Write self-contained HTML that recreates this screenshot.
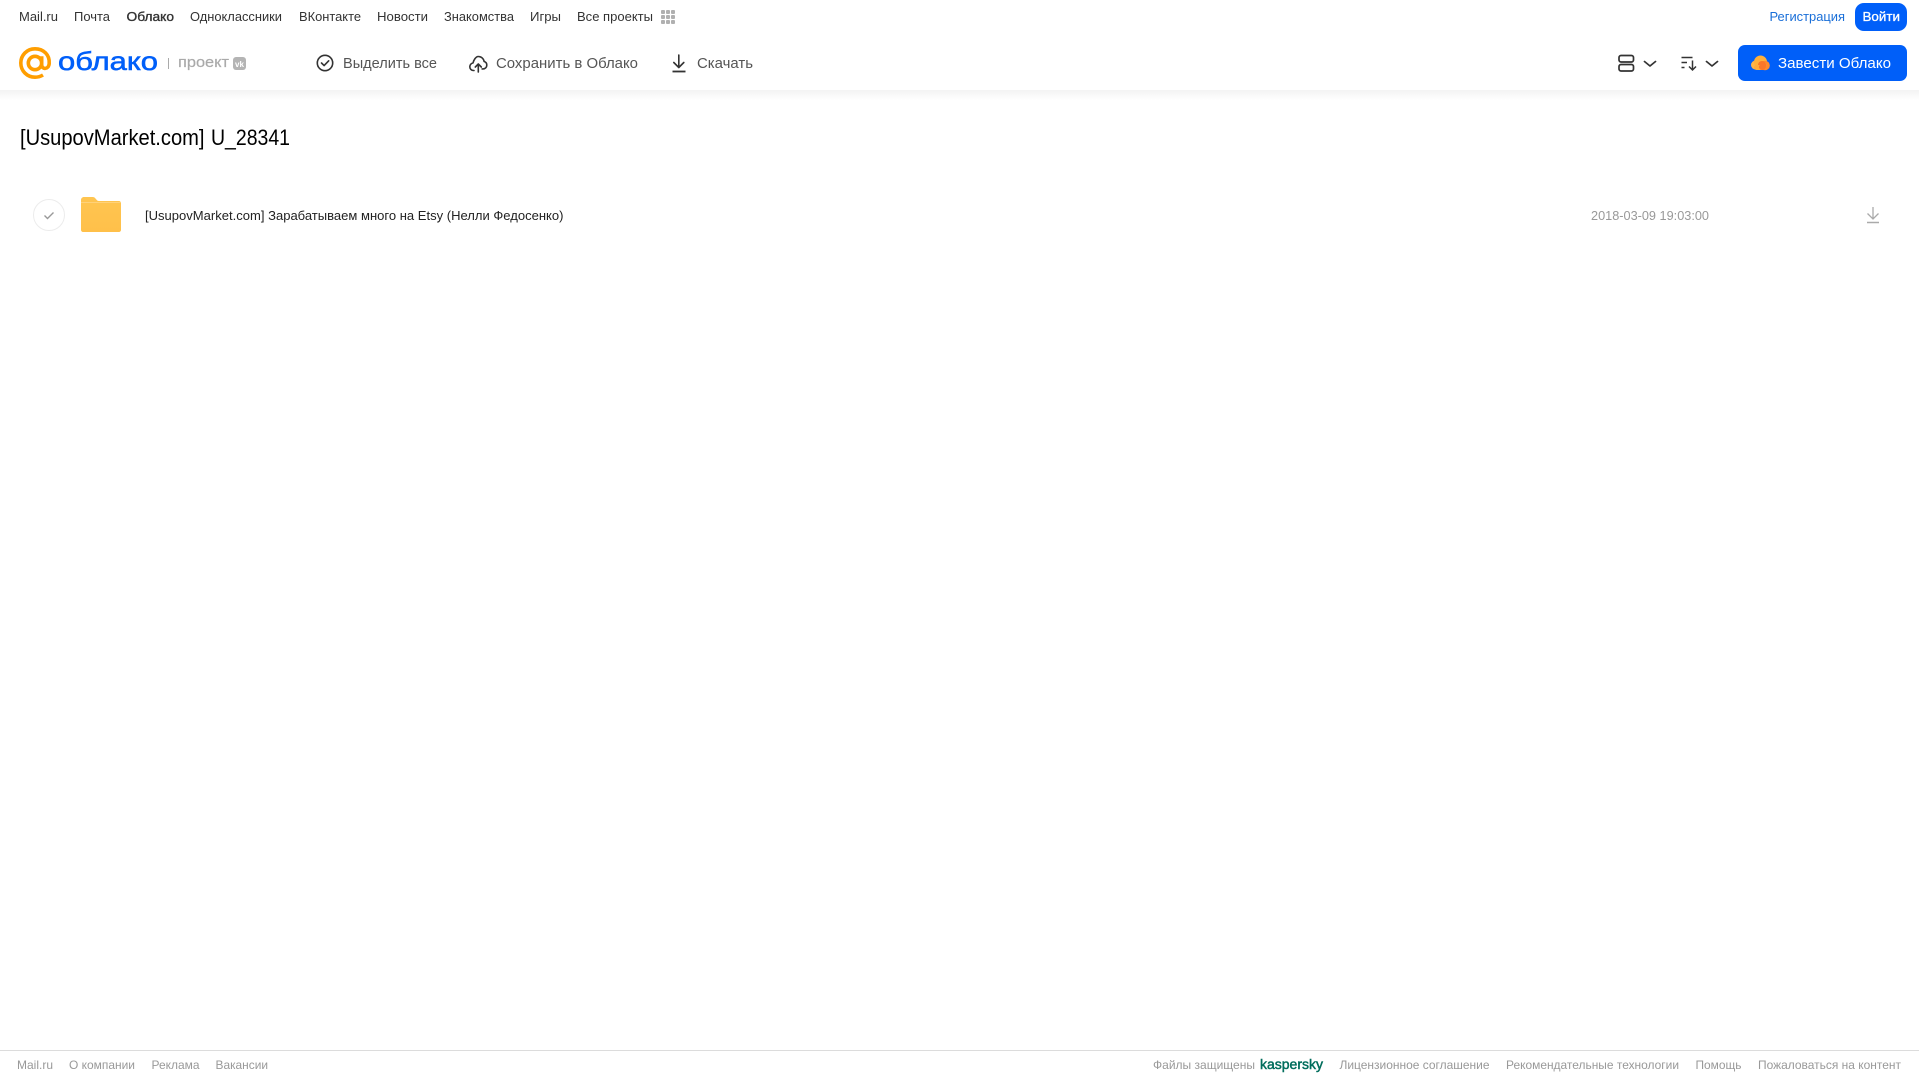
<!DOCTYPE html>
<html lang="ru">
<head>
<meta charset="utf-8">
<title>Облако</title>
<style>
html,body{margin:0;padding:0;background:#fff;width:1919px;height:1079px;overflow:hidden}
svg{display:block;position:absolute;left:0;top:0}
text{font-family:"Liberation Sans",sans-serif}
.n{font-size:13px;fill:#333}
.t{font-size:15px;fill:#555}
.f{font-size:12px;fill:#999}
</style>
</head>
<body>
<svg width="1919" height="1079" viewBox="0 0 1919 1079" xmlns="http://www.w3.org/2000/svg">
<defs>
<linearGradient id="sh" x1="0" y1="0" x2="0" y2="1"><stop offset="0" stop-color="#f3f3f3"/><stop offset="1" stop-color="#fff"/></linearGradient>
<linearGradient id="fo" x1="0" y1="0" x2="0" y2="1"><stop offset="0" stop-color="#ffc550"/><stop offset="1" stop-color="#ffc04a"/></linearGradient>
</defs>
<rect width="1919" height="1079" fill="#fff"/>
<rect x="0" y="90" width="1919" height="10" fill="url(#sh)"/>

<!-- top nav -->
<text class="n" x="19" y="21" textLength="39" lengthAdjust="spacingAndGlyphs">Mail.ru</text>
<text class="n" x="74" y="21" textLength="36" lengthAdjust="spacingAndGlyphs">Почта</text>
<text class="n" x="126.500" y="21" textLength="47.500" lengthAdjust="spacingAndGlyphs" stroke="#333" stroke-width=".35">Облако</text>
<text class="n" x="190" y="21" textLength="92" lengthAdjust="spacingAndGlyphs">Одноклассники</text>
<text class="n" x="299" y="21" textLength="62" lengthAdjust="spacingAndGlyphs">ВКонтакте</text>
<text class="n" x="377" y="21" textLength="51" lengthAdjust="spacingAndGlyphs">Новости</text>
<text class="n" x="444" y="21" textLength="70" lengthAdjust="spacingAndGlyphs">Знакомства</text>
<text class="n" x="530" y="21" textLength="31" lengthAdjust="spacingAndGlyphs">Игры</text>
<text class="n" x="577" y="21" textLength="76" lengthAdjust="spacingAndGlyphs">Все проекты</text>
<g fill="#b0b0b0">
<rect x="661" y="10" width="4" height="4" rx="1"/><rect x="666" y="10" width="4" height="4" rx="1"/><rect x="671" y="10" width="4" height="4" rx="1"/>
<rect x="661" y="15" width="4" height="4" rx="1"/><rect x="666" y="15" width="4" height="4" rx="1"/><rect x="671" y="15" width="4" height="4" rx="1"/>
<rect x="661" y="20" width="4" height="4" rx="1"/><rect x="666" y="20" width="4" height="4" rx="1"/><rect x="671" y="20" width="4" height="4" rx="1"/>
</g>
<text class="n" x="1769.500" y="21" textLength="75.500" lengthAdjust="spacingAndGlyphs" style="fill:#1a6fd8">Регистрация</text>
<rect x="1855" y="3" width="52" height="28" rx="9" fill="#005ff9"/>
<text x="1862.500" y="21" textLength="37.500" lengthAdjust="spacingAndGlyphs" font-size="13" fill="#fff" stroke="#fff" stroke-width=".3">Войти</text>

<!-- logo -->
<g fill="none" stroke="#ff9e00" stroke-width="3.600">
<circle cx="35" cy="63" r="6.700"/>
<path d="M41.700 56.300v8.500c0 5 7 5 7.500-1.300C49.900 54.800 43.500 48.800 35 48.800c-8 0-14.200 6.300-14.200 14.200S27 77.200 35 77.200c3 0 5.500-.7 8-2.200"/>
</g>
<text x="58" y="70" font-size="26" textLength="100" lengthAdjust="spacingAndGlyphs" fill="#005ff9" stroke="#005ff9" stroke-width=".55">облако</text>
<rect x="168" y="58" width="1" height="11" fill="#aaa"/>
<text x="178" y="67" font-size="14.500" textLength="51" lengthAdjust="spacingAndGlyphs" fill="#aaa" stroke="#aaa" stroke-width=".2">проект</text>
<rect x="233" y="57" width="13" height="13" rx="3" fill="#b4b4b4"/>
<text x="235" y="67" font-size="8" font-weight="700" textLength="9" lengthAdjust="spacingAndGlyphs" fill="#fff">vk</text>

<!-- toolbar -->
<g fill="none" stroke="#333" stroke-width="1.600" stroke-linecap="round" stroke-linejoin="round">
<circle cx="325" cy="63" r="7.700"/>
<path d="M321.500 63l2.600 2.600 4.600-4.800"/>
<path d="M474 70.500h-.5c-2.100 0-3.700-1.700-3.700-3.800 0-1.900 1.400-3.500 3.200-3.700C473.600 60.300 475.700 56.500 478.300 56.500c3 0 5.400 2.200 5.800 5 1.500.4 2.700 1.800 2.700 3.600 0 2.100-1.600 3.800-3.700 3.800h-1"/>
<path d="M478.300 72v-8M475.300 67l3-3 3 3"/>
<path d="M678.800 55v12M673.800 62.500l5 5 5-5"/>
<path d="M672.500 71.500h13" stroke-width="1.800" stroke-linecap="butt"/>
</g>
<text class="t" x="343" y="68" textLength="94" lengthAdjust="spacingAndGlyphs">Выделить все</text>
<text class="t" x="496" y="68" textLength="142" lengthAdjust="spacingAndGlyphs">Сохранить в Облако</text>
<text class="t" x="697" y="68" textLength="56" lengthAdjust="spacingAndGlyphs">Скачать</text>

<!-- right toolbar -->
<g fill="none" stroke="#333" stroke-width="1.700">
<rect x="1619" y="55.500" width="14.500" height="6.500" rx="2"/>
<rect x="1619" y="64.500" width="14.500" height="6.500" rx="2"/>
<path d="M1644.500 61.500l5.500 4.500 5.500-4.500M1706.500 61.500l5.500 4.500 5.500-4.500" stroke-linecap="round" stroke-linejoin="round"/>
<path d="M1681.500 57.500h11M1681.500 62.500h5.500M1681.500 67.500h3" stroke-width="1.400"/>
<path d="M1692.500 60.500v9.500M1689 66.500l3.500 3.500 3.500-3.500" stroke-width="1.500"/>
</g>
<rect x="1738" y="45" width="169" height="36" rx="7" fill="#005ff9"/>
<circle cx="1755.500" cy="65" r="4.500" fill="#ffb54a"/>
<circle cx="1760.500" cy="62" r="6.500" fill="#ffb03b"/>
<circle cx="1765" cy="65.500" r="4.800" fill="#ff8a2a"/>
<circle cx="1762" cy="65" r="4" fill="#f9772a"/>
<rect x="1754" y="65" width="12" height="5" rx="2.500" fill="#ffab3a"/>
<rect x="1759" y="64" width="7" height="6" rx="3" fill="#f9772a"/>
<text x="1778" y="68" font-size="15" textLength="113" lengthAdjust="spacingAndGlyphs" fill="#fff">Завести Облако</text>

<!-- title -->
<text x="20" y="145" font-size="22" textLength="184.500" lengthAdjust="spacingAndGlyphs" fill="#000">[UsupovMarket.com]</text>
<text x="211" y="145" font-size="22" textLength="79" lengthAdjust="spacingAndGlyphs" fill="#000">U_28341</text>

<!-- row -->
<circle cx="49" cy="215" r="15.500" fill="#fff" stroke="#ececec" stroke-width="1"/>
<path d="M44.500 215.500l3 3 6-6" fill="none" stroke="#999" stroke-width="1.400"/>
<path d="M81 200c0-1.700 1.300-3 3-3h8.500c1.500 0 2.300.6 3.200 1.700l1.300 1.600c.5.500 1 .7 1.700.7H119c1.100 0 2 .9 2 2v27c0 1.100-.9 2-2 2H83c-1.100 0-2-.9-2-2z" fill="url(#fo)"/>
<rect x="81" y="202" width="40" height="1" fill="#ffd27a"/>
<text x="145" y="220" font-size="13" textLength="418.500" lengthAdjust="spacingAndGlyphs" fill="#222">[UsupovMarket.com] Зарабатываем много на Etsy (Нелли Федосенко)</text>
<text x="1591" y="220" font-size="12.600" textLength="118" lengthAdjust="spacingAndGlyphs" fill="#999">2018-03-09 19:03:00</text>
<g fill="none" stroke="#aaa" stroke-width="1.300">
<path d="M1873 207v12M1867.500 213.500l5.500 5.500 5.500-5.500"/>
<path d="M1867 222.500h12" stroke-width="1.500"/>
</g>

<!-- footer -->
<rect x="0" y="1050" width="1919" height="1" fill="#dcdcdc"/>
<text class="f" x="17" y="1069" textLength="36" lengthAdjust="spacingAndGlyphs">Mail.ru</text>
<text class="f" x="69" y="1069" textLength="66" lengthAdjust="spacingAndGlyphs">О компании</text>
<text class="f" x="151.500" y="1069" textLength="48" lengthAdjust="spacingAndGlyphs">Реклама</text>
<text class="f" x="215.500" y="1069" textLength="52.500" lengthAdjust="spacingAndGlyphs">Вакансии</text>
<text class="f" x="1153" y="1069" textLength="102" lengthAdjust="spacingAndGlyphs">Файлы защищены</text>
<text x="1260" y="1069" font-size="13.500" textLength="63" lengthAdjust="spacingAndGlyphs" fill="#006d5c" stroke="#006d5c" stroke-width=".45">kaspersky</text>
<text class="f" x="1339.500" y="1069" textLength="150" lengthAdjust="spacingAndGlyphs">Лицензионное соглашение</text>
<text class="f" x="1506" y="1069" textLength="173" lengthAdjust="spacingAndGlyphs">Рекомендательные технологии</text>
<text class="f" x="1695.500" y="1069" textLength="46" lengthAdjust="spacingAndGlyphs">Помощь</text>
<text class="f" x="1758" y="1069" textLength="143" lengthAdjust="spacingAndGlyphs">Пожаловаться на контент</text>
</svg>
</body>
</html>
